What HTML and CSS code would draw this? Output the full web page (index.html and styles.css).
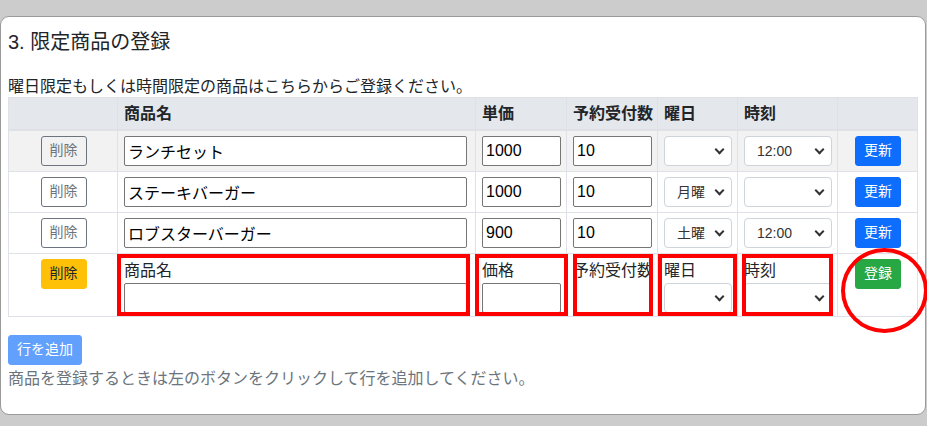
FILE: index.html
```html
<!DOCTYPE html>
<html lang="ja">
<head>
  <meta charset="UTF-8" />
  <meta name="viewport" content="width=device-width, initial-scale=1.0" />
  <title>限定商品の登録</title>
  <link rel="stylesheet" href="styles.css">
</head>
<body>
  <div class="card">
    <h2 class="card-title">3. 限定商品の登録</h2>
    <p class="lead-text">曜日限定もしくは時間限定の商品はこちらからご登録ください。</p>

    <table class="item-table">
      <colgroup>
        <col class="col-del">
        <col class="col-name">
        <col class="col-price">
        <col class="col-qty">
        <col class="col-day">
        <col class="col-time">
        <col class="col-act">
      </colgroup>
      <thead>
        <tr>
          <th></th>
          <th>商品名</th>
          <th>単価</th>
          <th>予約受付数</th>
          <th>曜日</th>
          <th>時刻</th>
          <th></th>
        </tr>
      </thead>
      <tbody>
        <tr class="striped">
          <td class="center"><button class="btn btn-sm btn-outline">削除</button></td>
          <td class="name"><input class="form-input" type="text" value="ランチセット"></td>
          <td><input class="form-input" type="text" value="1000"></td>
          <td><input class="form-input" type="text" value="10"></td>
          <td><span class="select"><select><option></option></select></span></td>
          <td><span class="select"><select><option>12:00</option></select></span></td>
          <td class="center"><button class="btn btn-sm btn-primary">更新</button></td>
        </tr>
        <tr>
          <td class="center"><button class="btn btn-sm btn-outline">削除</button></td>
          <td class="name"><input class="form-input" type="text" value="ステーキバーガー"></td>
          <td><input class="form-input" type="text" value="1000"></td>
          <td><input class="form-input" type="text" value="10"></td>
          <td><span class="select"><select><option>月曜</option></select></span></td>
          <td><span class="select"><select><option></option></select></span></td>
          <td class="center"><button class="btn btn-sm btn-primary">更新</button></td>
        </tr>
        <tr>
          <td class="center"><button class="btn btn-sm btn-outline">削除</button></td>
          <td class="name"><input class="form-input" type="text" value="ロブスターバーガー"></td>
          <td><input class="form-input" type="text" value="900"></td>
          <td><input class="form-input" type="text" value="10"></td>
          <td><span class="select"><select><option>土曜</option></select></span></td>
          <td><span class="select"><select><option>12:00</option></select></span></td>
          <td class="center"><button class="btn btn-sm btn-primary">更新</button></td>
        </tr>
        <tr class="new-row">
          <td class="center"><button class="btn btn-sm btn-warning">削除</button></td>
          <td class="name flag flag-name">
            <label class="field-label">商品名</label>
            <input class="form-input" type="text">
          </td>
          <td class="flag flag-price">
            <label class="field-label">価格</label>
            <input class="form-input" type="text">
          </td>
          <td class="flag flag-qty">
            <label class="field-label">予約受付数</label>
          </td>
          <td class="flag flag-day">
            <label class="field-label">曜日</label>
            <span class="select"><select><option></option></select></span>
          </td>
          <td class="flag flag-time">
            <label class="field-label">時刻</label>
            <span class="select"><select><option></option></select></span>
          </td>
          <td class="center ring"><button class="btn btn-sm btn-success">登録</button></td>
        </tr>
      </tbody>
    </table>

    <button class="btn btn-sm btn-primary add-row" disabled>行を追加</button>
    <p class="help">商品を登録するときは左のボタンをクリックして行を追加してください。</p>
  </div>
</body>
</html>
```

FILE: styles.css
```css
* {
  box-sizing: border-box;
}

body {
  margin: 0;
  padding-top: 16px;
  background: #cccccc;
  color: #212529;
  font-family: "Liberation Sans", "Noto Sans CJK JP", sans-serif;
  font-size: 16px;
}

.card {
  width: 926px;
  background: #fff;
  border: 1px solid #9a9a9a;
  border-radius: 9px;
  padding: 11px 8px 23px 7px;
}

.card-title {
  margin: 0;
  font-size: 20px;
  font-weight: normal;
  line-height: 28px;
}

.lead-text {
  margin: 21px 0 0;
  line-height: 20px;
}

/* table */
.item-table {
  width: 909px;
  table-layout: fixed;
  border-collapse: collapse;
}

.col-del { width: 109px; }
.col-name { width: 358px; }
.col-price { width: 91px; }
.col-qty { width: 91px; }
.col-day { width: 80px; }
.col-time { width: 100px; }
.col-act { width: 80px; }

.item-table th {
  background: #e4e7eb;
  border: 1px solid #dee2e6;
  border-bottom-width: 2px;
  padding: 4px 6px 3px;
  line-height: 24px;
  text-align: left;
  font-weight: bold;
  white-space: nowrap;
}

.item-table td {
  border: 1px solid #dee2e6;
  padding: 5px 5px 5px 6px;
  vertical-align: top;
}

.item-table td.name {
  padding-right: 8px;
}

.item-table tr.striped td {
  background: #f2f2f2;
}

.item-table td.center {
  text-align: center;
}

.new-row td {
  padding-bottom: 3px;
}

.field-label {
  display: block;
  line-height: 24px;
  white-space: nowrap;
}

.form-input {
  display: block;
  width: 100%;
  height: 30px;
  border: 1px solid #767676;
  border-radius: 2px;
  padding: 0 3px;
  font-family: inherit;
  font-size: 16px;
  color: #000;
  background: #fff;
}

.select {
  position: relative;
  display: block;
}

.select select {
  display: block;
  width: 100%;
  height: 30px;
  appearance: none;
  -webkit-appearance: none;
  border: 1px solid #ced4da;
  border-radius: 4px;
  padding: 0 22px 0 12px;
  font-family: inherit;
  font-size: 14px;
  color: #333;
  background: #fff;
}

.select::after {
  content: "";
  position: absolute;
  right: 9px;
  top: 10px;
  width: 5px;
  height: 5px;
  border-right: 2px solid #333;
  border-bottom: 2px solid #333;
  transform: rotate(45deg);
  pointer-events: none;
}

/* buttons */
.btn {
  display: inline-block;
  font-family: inherit;
  border: 1px solid transparent;
  cursor: pointer;
}

.btn-sm {
  font-size: 14px;
  line-height: 21px;
  padding: 3px 8px 4px;
  border-radius: 3px;
}

.btn-outline {
  background: transparent;
  color: #6c757d;
  border-color: #6c757d;
}

.btn-primary {
  background: #0d6efd;
  border-color: #0d6efd;
  color: #fff;
}

.btn-primary:disabled {
  opacity: 0.65;
  cursor: default;
}

.btn-warning {
  background: #ffc107;
  border-color: #ffc107;
  color: #212529;
}

.btn-success {
  background: #28a745;
  border-color: #28a745;
  color: #fff;
}

.add-row {
  margin-top: 18px;
}

.help {
  margin: 2px 0 0;
  line-height: 24px;
  color: #6c757d;
}

/* red annotations drawn over the new row */
.flag,
.ring {
  position: relative;
}

.flag::after,
.ring::after {
  content: "";
  position: absolute;
  border: 4px solid #ff0000;
  pointer-events: none;
}

.flag::after {
  top: 0;
  bottom: 0;
}

.flag-name::after { left: -1px; right: 5px; }
.flag-price::after { left: -1px; right: -2px; }
.flag-qty::after { left: 6px; right: 4px; }
.flag-day::after { left: 0; right: 0; }
.flag-time::after { left: 4px; right: 4px; }

.ring::after {
  left: 3px;
  top: -6px;
  width: 79px;
  height: 77px;
  border-radius: 50%;
}
```
